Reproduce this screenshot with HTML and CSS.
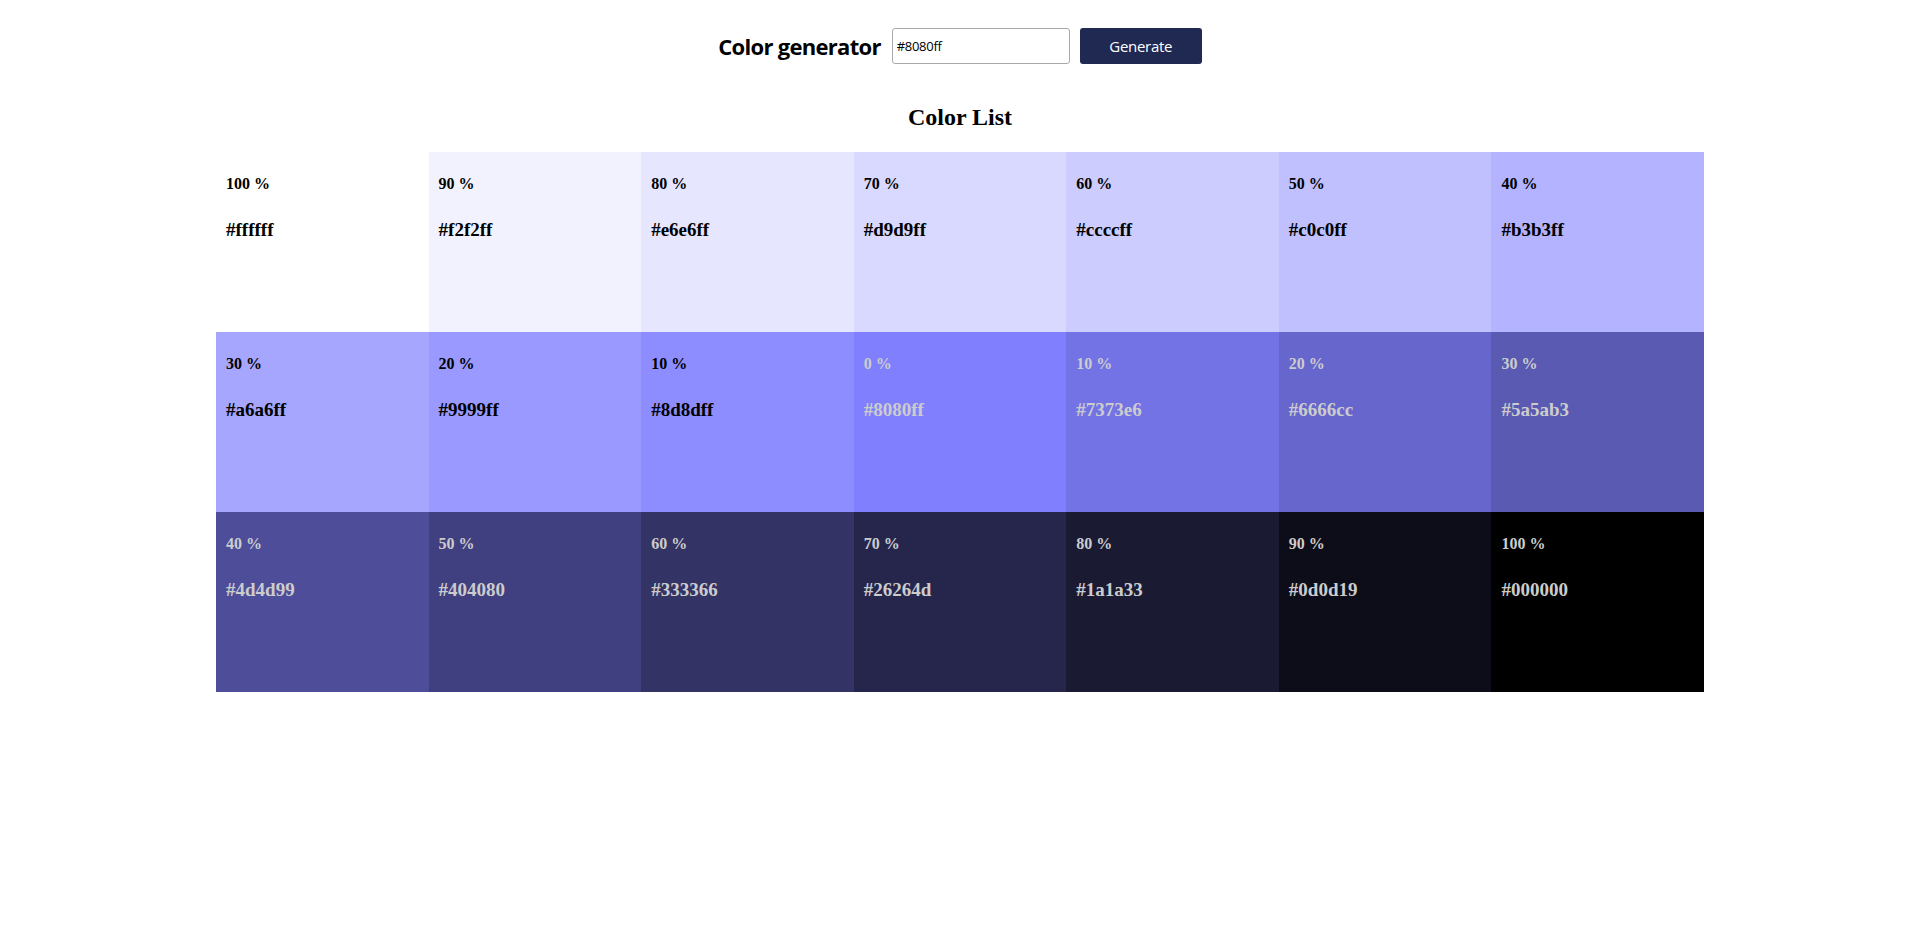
FILE: index.html
```html
<!DOCTYPE html>
<html lang="en">
<head>
<meta charset="utf-8">
<title>Color generator</title>
<link rel="stylesheet" href="styles.css">
</head>
<body>
<header class="topbar">
  <h1 class="brand">Color generator</h1>
  <form class="picker">
    <input class="hex-input" type="text" value="#8080ff">
    <button class="btn" type="button">Generate</button>
  </form>
</header>
<main class="list">
  <h2 class="list-title">Color List</h2>
  <section class="grid">
    <article class="swatch" style="background:#ffffff"><p class="pct">100 %</p><p class="hex">#ffffff</p></article>
    <article class="swatch" style="background:#f2f2ff"><p class="pct">90 %</p><p class="hex">#f2f2ff</p></article>
    <article class="swatch" style="background:#e6e6ff"><p class="pct">80 %</p><p class="hex">#e6e6ff</p></article>
    <article class="swatch" style="background:#d9d9ff"><p class="pct">70 %</p><p class="hex">#d9d9ff</p></article>
    <article class="swatch" style="background:#ccccff"><p class="pct">60 %</p><p class="hex">#ccccff</p></article>
    <article class="swatch" style="background:#c0c0ff"><p class="pct">50 %</p><p class="hex">#c0c0ff</p></article>
    <article class="swatch" style="background:#b3b3ff"><p class="pct">40 %</p><p class="hex">#b3b3ff</p></article>
    <article class="swatch" style="background:#a6a6ff"><p class="pct">30 %</p><p class="hex">#a6a6ff</p></article>
    <article class="swatch" style="background:#9999ff"><p class="pct">20 %</p><p class="hex">#9999ff</p></article>
    <article class="swatch" style="background:#8d8dff"><p class="pct">10 %</p><p class="hex">#8d8dff</p></article>
    <article class="swatch dark" style="background:#8080ff"><p class="pct">0 %</p><p class="hex">#8080ff</p></article>
    <article class="swatch dark" style="background:#7373e6"><p class="pct">10 %</p><p class="hex">#7373e6</p></article>
    <article class="swatch dark" style="background:#6666cc"><p class="pct">20 %</p><p class="hex">#6666cc</p></article>
    <article class="swatch dark" style="background:#5a5ab3"><p class="pct">30 %</p><p class="hex">#5a5ab3</p></article>
    <article class="swatch dark" style="background:#4d4d99"><p class="pct">40 %</p><p class="hex">#4d4d99</p></article>
    <article class="swatch dark" style="background:#404080"><p class="pct">50 %</p><p class="hex">#404080</p></article>
    <article class="swatch dark" style="background:#333366"><p class="pct">60 %</p><p class="hex">#333366</p></article>
    <article class="swatch dark" style="background:#26264d"><p class="pct">70 %</p><p class="hex">#26264d</p></article>
    <article class="swatch dark" style="background:#1a1a33"><p class="pct">80 %</p><p class="hex">#1a1a33</p></article>
    <article class="swatch dark" style="background:#0d0d19"><p class="pct">90 %</p><p class="hex">#0d0d19</p></article>
    <article class="swatch dark" style="background:#000000"><p class="pct">100 %</p><p class="hex">#000000</p></article>
  </section>
</main>
</body>
</html>
```
FILE: styles.css
```css
* { box-sizing: border-box; }
body {
  margin: 0;
  background: #fff;
  color: #000;
  font-family: "Liberation Serif", "Times New Roman", serif;
}
.topbar {
  display: flex;
  justify-content: center;
  align-items: center;
  gap: 11px;
  padding-top: 28px;
}
.brand {
  margin: 0;
  font-family: "Open Sans", "Noto Sans", sans-serif;
  font-weight: 700;
  font-size: 22px;
  letter-spacing: -0.7px;
  color: #000;
}
.picker {
  display: flex;
  align-items: center;
  gap: 10px;
  margin: 0;
}
.hex-input {
  width: 178px;
  height: 36px;
  border: 1px solid #a9a9a9;
  border-radius: 3px;
  padding: 0 4px;
  font-family: "Open Sans", "Noto Sans", sans-serif;
  font-size: 13px;
  letter-spacing: -0.3px;
  color: #000;
  background: #fff;
}
.btn {
  width: 122px;
  height: 36px;
  border: 0;
  border-radius: 3px;
  background: #1f2952;
  color: #fff;
  font-family: "Open Sans", "Noto Sans", sans-serif;
  font-size: 15px;
  letter-spacing: -0.3px;
  cursor: pointer;
}
.list-title {
  margin: 39px 0 21px;
  text-align: center;
  font-size: 24px;
  font-weight: 700;
  line-height: 28px;
}
.grid {
  width: 1488px;
  margin: 0 auto;
  display: grid;
  grid-template-columns: repeat(7, 1fr);
}
.swatch {
  height: 180px;
  padding: 23px 10px 0;
}
.pct {
  margin: 0;
  font-size: 16px;
  font-weight: 700;
  line-height: 18px;
}
.hex {
  margin: 26px 0 0;
  font-size: 19px;
  font-weight: 700;
  line-height: 22px;
}
.dark { color: #cccccc; }
```
